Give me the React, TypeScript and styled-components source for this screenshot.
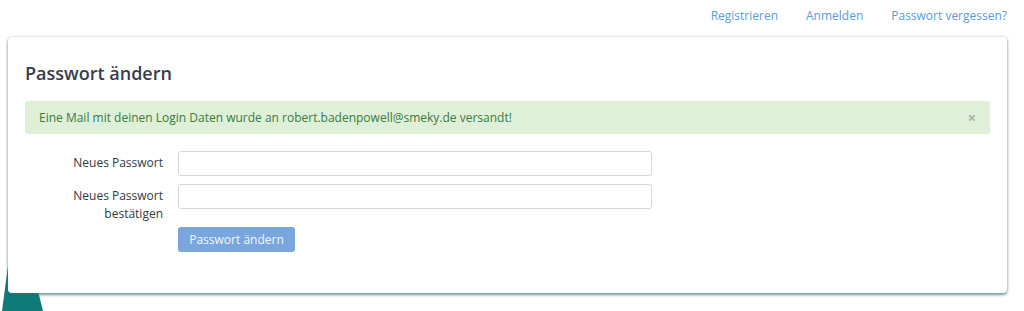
import styled, { createGlobalStyle } from "styled-components";

const GlobalStyle = createGlobalStyle`
  html, body {
    margin: 0;
    padding: 0;
    background: #ffffff;
    font-family: "Open Sans", "Liberation Sans", sans-serif;
    overflow: hidden;
  }
`;

const Page = styled.div`
  position: relative;
  width: 1024px;
  height: 311px;
  overflow: hidden;
`;

const Decoration = styled.svg`
  position: absolute;
  left: 0;
  bottom: 0;
  z-index: 0;
`;

const TopNav = styled.nav`
  display: flex;
  justify-content: flex-end;
  align-items: center;
  gap: 28px;
  height: 30px;
  padding-right: 17px;
  position: relative;
  z-index: 1;
`;

const NavLink = styled.a`
  font-size: 12px;
  color: #5b9bd8;
  text-decoration: none;
  cursor: pointer;
`;

const Card = styled.section`
  position: relative;
  z-index: 1;
  margin: 7px 17px 0 8px;
  background: #ffffff;
  border-radius: 4px;
  box-shadow: 0 2px 3px rgba(50, 110, 110, 0.65), 0 0 3px rgba(80, 130, 130, 0.35);
  padding: 24px 17px 41px 17px;
`;

const Title = styled.h1`
  margin: 0 0 16px 0;
  font-size: 18px;
  line-height: 24px;
  font-weight: 600;
  color: #363d4b;
`;

const Alert = styled.div`
  display: flex;
  justify-content: space-between;
  align-items: center;
  background: #dff0d8;
  color: #3c7a3d;
  border-radius: 3px;
  padding: 8px 14px;
  font-size: 12px;
  line-height: 17px;
  margin-bottom: 17px;
`;

const Close = styled.span`
  color: #a9b4a7;
  font-size: 15px;
  font-weight: 700;
  line-height: 17px;
  cursor: pointer;
`;

const Form = styled.form`
  display: flex;
  flex-direction: column;
  gap: 8px;
`;

const Row = styled.div<{ $offset?: number }>`
  display: grid;
  grid-template-columns: 138px 474px;
  column-gap: 15px;
  align-items: start;
  margin-top: ${(p) => p.$offset ?? 0}px;
`;

const Label = styled.label`
  text-align: right;
  font-size: 12px;
  line-height: 18px;
  color: #333a40;
  padding-top: 3px;
`;

const Input = styled.input`
  box-sizing: border-box;
  height: 25px;
  width: 100%;
  border: 1px solid #d4d7da;
  border-radius: 3px;
  background: #fff;
  margin: 0;
`;

const Submit = styled.button`
  width: 117px;
  height: 25px;
  border: none;
  border-radius: 3px;
  background: #79a6dc;
  color: #f2f6fb;
  font-family: inherit;
  font-size: 12px;
  padding: 0;
  cursor: pointer;
`;

export default function App() {
  return (
    <Page>
      <GlobalStyle />
      <Decoration width="60" height="60" viewBox="0 0 60 60">
        <polygon points="10,0 2,60 43,60 30,8" fill="#0f7b78" />
      </Decoration>
      <TopNav>
        <NavLink>Registrieren</NavLink>
        <NavLink>Anmelden</NavLink>
        <NavLink>Passwort vergessen?</NavLink>
      </TopNav>
      <Card>
        <Title>Passwort ändern</Title>
        <Alert>
          <span>Eine Mail mit deinen Login Daten wurde an robert.badenpowell@smeky.de versandt!</span>
          <Close>×</Close>
        </Alert>
        <Form>
          <Row>
            <Label>Neues Passwort</Label>
            <Input type="password" />
          </Row>
          <Row>
            <Label>
              Neues Passwort
              <br />
              bestätigen
            </Label>
            <Input type="password" />
          </Row>
          <Row $offset={-4}>
            <span />
            <Submit type="button">Passwort ändern</Submit>
          </Row>
        </Form>
      </Card>
    </Page>
  );
}
